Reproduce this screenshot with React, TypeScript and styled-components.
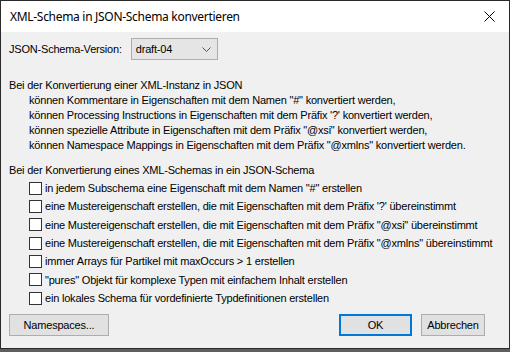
import styled, { createGlobalStyle } from "styled-components";

const GlobalStyle = createGlobalStyle`
  html, body {
    margin: 0;
    padding: 0;
    background: #5e5e5e;
  }
`;

const Screen = styled.div`
  width: 510px;
  height: 352px;
  background: #5e5e5e;
  overflow: hidden;
`;

const Window = styled.div`
  width: 510px;
  height: 349px;
  box-sizing: border-box;
  border: 1px solid #2b2b2b;
  background: #f0f0f0;
  display: flex;
  flex-direction: column;
  font-family: Tahoma, "Liberation Sans", Arial, sans-serif;
  font-size: 11px;
  letter-spacing: -0.2px;
  color: #000;
`;

const TitleBar = styled.div`
  flex: none;
  height: 31px;
  background: #fff;
  display: flex;
  align-items: center;
  justify-content: space-between;
  padding: 0 14px 0 9px;
  font-family: "Segoe UI", "Noto Sans", sans-serif;
  font-size: 12px;
  letter-spacing: -0.3px;
`;

const Body = styled.div`
  flex: 1;
  display: flex;
  flex-direction: column;
  padding: 6px 24px 0 8px;
`;

const VersionRow = styled.div`
  display: flex;
  align-items: center;
  gap: 9px;
  height: 22px;
`;

const Select = styled.div`
  width: 87px;
  height: 22px;
  box-sizing: border-box;
  border: 1px solid #adadad;
  background: #e5e5e5;
  display: flex;
  align-items: center;
  justify-content: space-between;
  padding: 0 6px 0 4px;
`;

const Section = styled.div<{ top: number }>`
  margin-top: ${({ top }) => top}px;
  display: flex;
  flex-direction: column;
`;

const Line = styled.div<{ indent?: boolean; tall?: boolean }>`
  height: ${({ tall }) => (tall ? 18 : 15)}px;
  line-height: ${({ tall }) => (tall ? 18 : 15)}px;
  padding-left: ${({ indent }) => (indent ? 20 : 0)}px;
  white-space: nowrap;
`;

const CheckRow = styled.label`
  height: 18.33px;
  display: flex;
  align-items: center;
  padding-left: 20px;
  white-space: nowrap;
`;

const Box = styled.span`
  width: 13px;
  height: 13px;
  box-sizing: border-box;
  border: 1px solid #333;
  background: #fff;
  margin-right: 3px;
  flex: none;
`;

const ButtonRow = styled.div`
  display: flex;
  align-items: center;
  margin-top: 7px;
`;

const Button = styled.div<{ primary?: boolean; width: number }>`
  width: ${({ width }) => width}px;
  height: 22px;
  box-sizing: border-box;
  border: ${({ primary }) => (primary ? "2px solid #0078d7" : "1px solid #adadad")};
  background: #e1e1e1;
  display: flex;
  align-items: center;
  justify-content: center;
`;

const Spacer = styled.div`
  flex: 1;
`;

const Gap = styled.div`
  width: 9px;
`;

const infoLines = [
  'können Kommentare in Eigenschaften mit dem Namen "#" konvertiert werden,',
  "können Processing Instructions in Eigenschaften mit dem Präfix '?' konvertiert werden,",
  'können spezielle Attribute in Eigenschaften mit dem Präfix "@xsi" konvertiert werden,',
  'können Namespace Mappings in Eigenschaften mit dem Präfix "@xmlns" konvertiert werden.',
];

const options = [
  'in jedem Subschema eine Eigenschaft mit dem Namen "#" erstellen',
  "eine Mustereigenschaft erstellen, die mit Eigenschaften mit dem Präfix '?' übereinstimmt",
  'eine Mustereigenschaft erstellen, die mit Eigenschaften mit dem Präfix "@xsi" übereinstimmt',
  'eine Mustereigenschaft erstellen, die mit Eigenschaften mit dem Präfix "@xmlns" übereinstimmt',
  "immer Arrays für Partikel mit maxOccurs > 1 erstellen",
  '"pures" Objekt für komplexe Typen mit einfachem Inhalt erstellen',
  "ein lokales Schema für vordefinierte Typdefinitionen erstellen",
];

export default function App() {
  return (
    <Screen>
      <GlobalStyle />
      <Window>
        <TitleBar>
          <span>XML-Schema in JSON-Schema konvertieren</span>
          <svg width="11" height="11" viewBox="0 0 11 11">
            <path d="M0.5 0.5L10.5 10.5M10.5 0.5L0.5 10.5" stroke="#000" strokeWidth="1" />
          </svg>
        </TitleBar>
        <Body>
          <VersionRow>
            <span>JSON-Schema-Version:</span>
            <Select>
              <span>draft-04</span>
              <svg width="9" height="5" viewBox="0 0 9 5">
                <path d="M0.5 0.5L4.5 4.5L8.5 0.5" stroke="#555" fill="none" />
              </svg>
            </Select>
          </VersionRow>
          <Section top={17.5}>
            <Line>Bei der Konvertierung einer XML-Instanz in JSON</Line>
            {infoLines.map((t) => (
              <Line indent key={t}>
                {t}
              </Line>
            ))}
          </Section>
          <Section top={8.5}>
            <Line tall>Bei der Konvertierung eines XML-Schemas in ein JSON-Schema</Line>
            {options.map((t) => (
              <CheckRow key={t}>
                <Box />
                {t}
              </CheckRow>
            ))}
          </Section>
          <ButtonRow>
            <Button width={100}>Namespaces...</Button>
            <Spacer />
            <Button primary width={73}>
              OK
            </Button>
            <Gap />
            <Button width={64}>Abbrechen</Button>
          </ButtonRow>
        </Body>
      </Window>
    </Screen>
  );
}
